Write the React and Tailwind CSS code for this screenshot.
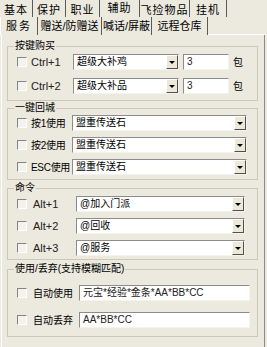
import React from 'react';

const FONT = "font-['Liberation_Sans','Noto_Sans_CJK_SC',sans-serif]";

const topTabs = [
  { label: '基本', w: 'w-[33px]' },
  { label: '保护', w: 'w-[33px]' },
  { label: '职业', w: 'w-[34px]' },
  { label: '辅助', w: 'w-[40px]', active: true },
  { label: '飞捡物品', w: 'w-[50px]' },
  { label: '挂机', w: 'w-[37px]' },
];

const subTabs = [
  { label: '服务', w: 'w-[38px]', active: true },
  { label: '赠送/防赠送', w: 'w-[64px]' },
  { label: '喊话/屏蔽', w: 'w-[50px]' },
  { label: '远程仓库', w: 'w-[56px]' },
];

const Check = () => (
  <span className="w-[10px] h-[10px] shrink-0 border border-t-[#858585] border-l-[#858585] border-r-white border-b-white bg-[#f3f2ec]" />
);

const Arrow = () => (
  <span className="w-[12px] h-[14px] shrink-0 flex items-center justify-center bg-[#ece9d8] border border-t-white border-l-white border-r-[#505050] border-b-[#505050]">
    <svg width="6" height="3" viewBox="0 0 6 3">
      <polygon points="0,0 6,0 3,3" fill="#000" />
    </svg>
  </span>
);

const Combo = ({ text, w }) => (
  <div className={`flex items-center h-[16px] ${w} bg-white border border-t-[#8c8c8c] border-l-[#8c8c8c] border-r-[#f4f3ee] border-b-[#f4f3ee]`}>
    <span className="flex-1 pl-[3px] leading-[14px] whitespace-nowrap overflow-hidden">{text}</span>
    <Arrow />
  </div>
);

const Input = ({ text, w }) => (
  <div className={`flex items-center h-[16px] ${w} bg-white border border-t-[#8c8c8c] border-l-[#8c8c8c] border-r-[#f4f3ee] border-b-[#f4f3ee]`}>
    <span className="pl-[3px] leading-[14px] whitespace-nowrap text-[#222]">{text}</span>
  </div>
);

const Group = ({ title, className, children }) => (
  <fieldset className={`ml-[5px] w-[251px] border border-[#cbc8b8] ${className}`}>
    <legend className="ml-[6px] px-[1px] leading-[14px] h-[14px] whitespace-nowrap">{title}</legend>
    {children}
  </fieldset>
);

export default function App() {
  return (
    <div className={`w-[267px] h-[347px] bg-[#ece9df] text-[10px] text-black overflow-hidden ${FONT}`}>
      {/* top tab row */}
      <div className="flex h-[17px] text-[11px]">
        {topTabs.map((t) => (
          <div
            key={t.label}
            className={`${t.w} flex justify-center border-r border-[#5a5a5a] tracking-[1px] whitespace-nowrap ${
              t.active ? 'pt-[2px]' : 'pt-[4px]'
            }`}
          >
            <span className="leading-[13px]">{t.label}</span>
          </div>
        ))}
      </div>

      {/* sub tab row */}
      <div className="flex h-[18px] text-[11px]">
        {subTabs.map((t) => (
          <div
            key={t.label}
            className={`${t.w} flex justify-center pt-[3px] border-r border-[#5a5a5a] whitespace-nowrap ${
              t.active ? 'border-l border-l-white tracking-[2px]' : ''
            }`}
          >
            <span className="leading-[13px]">{t.label}</span>
          </div>
        ))}
        <div className="flex-1 border-b border-white" />
      </div>

      {/* panel */}
      <div className="ml-[1px] w-[264px] h-[312px] border-l border-white border-r border-r-[#8a8a8a] pt-[4px]">
        <Group title="按键购买" className="pb-[6px]">
          <div className="flex flex-col gap-[8px] pt-[1px] pl-[9px]">
            {[
              ['Ctrl+1', '超级大补鸡'],
              ['Ctrl+2', '超级大补品'],
            ].map(([k, v]) => (
              <div key={k} className="flex items-center h-[16px]">
                <Check />
                <span className="ml-[4px] w-[42px] text-[11px] text-[#222] whitespace-nowrap">{k}</span>
                <Combo text={v} w="w-[106px]" />
                <div className="ml-[4px]">
                  <Input text="3" w="w-[46px]" />
                </div>
                <span className="ml-[4px]">包</span>
              </div>
            ))}
          </div>
        </Group>

        <Group title="一键回城" className="pb-[4px]">
          <div className="flex flex-col gap-[6px] pl-[9px]">
            {['按1使用', '按2使用', 'ESC使用'].map((k) => (
              <div key={k} className="flex items-center h-[16px]">
                <Check />
                <span className="ml-[4px] w-[41px] whitespace-nowrap tracking-[-0.3px]">{k}</span>
                <Combo text="盟重传送石" w="w-[175px]" />
              </div>
            ))}
          </div>
        </Group>

        <Group title="命令" className="pb-[3px] mt-[1px]">
          <div className="flex flex-col gap-[6px] pt-[1px] pl-[9px]">
            {[
              ['Alt+1', '@加入门派'],
              ['Alt+2', '@回收'],
              ['Alt+3', '@服务'],
            ].map(([k, v]) => (
              <div key={k} className="flex items-center h-[16px]">
                <Check />
                <span className="ml-[6px] w-[43px] text-[11px] text-[#222] whitespace-nowrap">{k}</span>
                <Combo text={v} w="w-[169px]" />
              </div>
            ))}
          </div>
        </Group>

        <Group title="使用/丢弃(支持模糊匹配)" className="pb-[8px] mt-[2px]">
          <div className="flex flex-col gap-[11px] pt-[9px] pl-[9px]">
            {[
              ['自动使用', '元宝*经验*金条*AA*BB*CC'],
              ['自动丢弃', 'AA*BB*CC'],
            ].map(([k, v]) => (
              <div key={k} className="flex items-center h-[16px]">
                <Check />
                <span className="ml-[6px] w-[46px] whitespace-nowrap">{k}</span>
                <Input text={v} w="w-[171px]" />
              </div>
            ))}
          </div>
        </Group>
      </div>
    </div>
  );
}
